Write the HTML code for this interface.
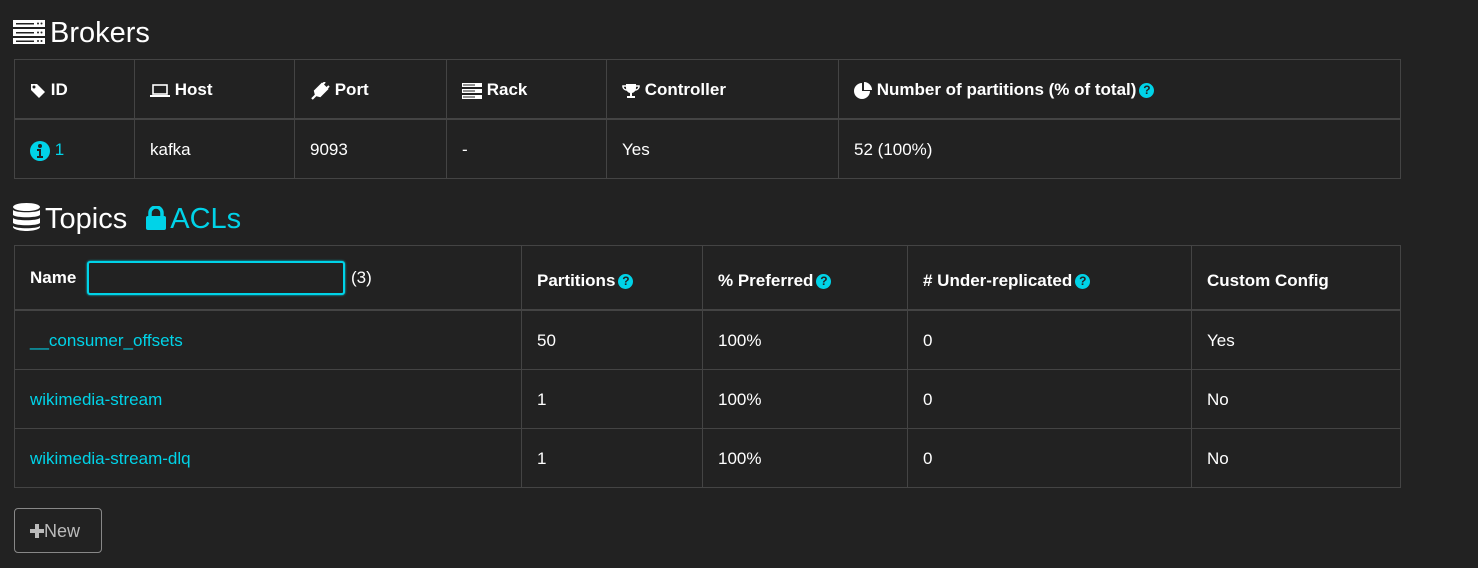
<!DOCTYPE html>
<html><head><meta charset="utf-8"><style>
*{margin:0;padding:0;box-sizing:border-box}
body{width:1478px;height:568px;background:#222;color:#fff;font-family:"Liberation Sans",sans-serif;font-size:17px;position:relative;overflow:hidden}
.a{position:absolute;white-space:nowrap}
.c{color:#00d3e8}
.h{font-weight:bold;font-size:17px;letter-spacing:0}
.line{position:absolute;background:#444}
.q{display:inline-block;width:15px;height:15px;border-radius:50%;background:#00d3e8;color:#222;font-size:12px;font-weight:bold;text-align:center;line-height:15px;vertical-align:1px;margin-left:3px;letter-spacing:0}
svg{vertical-align:middle}
</style></head><body>

<div class="a" style="left:13px;top:15px;font-size:29px;line-height:36px">
<svg width="32" height="24" viewBox="0 0 32 24" style="vertical-align:-2px;margin-right:5px"><g fill="#fff"><rect x="0" y="0" width="32" height="7"/><rect x="0" y="9" width="32" height="7"/><rect x="0" y="18" width="32" height="6"/></g><g fill="#222"><rect x="3" y="3" width="18" height="1.5"/><rect x="3" y="12" width="18" height="1.5"/><rect x="3" y="20.5" width="18" height="1.5"/><circle cx="25" cy="3.5" r="1"/><circle cx="28.5" cy="3.5" r="1"/><circle cx="25" cy="12.5" r="1"/><circle cx="28.5" cy="12.5" r="1"/><circle cx="25" cy="21" r="1"/><circle cx="28.5" cy="21" r="1"/></g></svg>Brokers</div>

<div class="line" style="left:14px;top:59px;width:1387px;height:1px"></div>
<div class="line" style="left:14px;top:118px;width:1387px;height:2px"></div>
<div class="line" style="left:14px;top:178px;width:1387px;height:1px"></div>
<div class="line" style="left:14px;top:59px;width:1px;height:120px"></div>
<div class="line" style="left:134px;top:59px;width:1px;height:120px"></div>
<div class="line" style="left:294px;top:59px;width:1px;height:120px"></div>
<div class="line" style="left:446px;top:59px;width:1px;height:120px"></div>
<div class="line" style="left:606px;top:59px;width:1px;height:120px"></div>
<div class="line" style="left:838px;top:59px;width:1px;height:120px"></div>
<div class="line" style="left:1400px;top:59px;width:1px;height:120px"></div>

<div class="a h" style="left:30px;top:80px"><svg width="16" height="16" viewBox="0 0 16 16"><path d="M1 1h6l8 8-6 6-8-8z" fill="#fff"/><circle cx="4" cy="4" r="1.5" fill="#222"/></svg> ID</div>
<div class="a h" style="left:150px;top:80px"><svg width="20" height="14" viewBox="0 0 20 14"><rect x="3" y="1" width="14" height="9" fill="none" stroke="#fff" stroke-width="1.6"/><rect x="0" y="11" width="20" height="2" fill="#fff"/></svg> Host</div>
<div class="a h" style="left:310px;top:80px"><svg width="20" height="18" viewBox="0 0 20 18"><path d="M2 17l4-4M6 13l-1-4 7-7 5 5-7 7z" stroke="#fff" stroke-width="2.2" fill="#fff"/><path d="M12 3l3-3M16 7l3-3" stroke="#fff" stroke-width="2"/></svg> Port</div>
<div class="a h" style="left:462px;top:80px"><svg width="20" height="16" viewBox="0 0 20 16"><g fill="#fff"><rect y="0" width="20" height="4"/><rect y="6" width="20" height="4"/><rect y="12" width="20" height="4"/></g><g fill="#222"><rect x="1" y="1.5" width="12" height="1"/><rect x="1" y="7.5" width="12" height="1"/><rect x="1" y="13.5" width="12" height="1"/></g></svg> Rack</div>
<div class="a h" style="left:622px;top:80px"><svg width="18" height="16" viewBox="0 0 18 16"><path d="M4 1h10v4a5 5 0 0 1-4 5v3h3v2H5v-2h3v-3a5 5 0 0 1-4-5z" fill="#fff"/><path d="M4 3H1v1a4 4 0 0 0 4 3M14 3h3v1a4 4 0 0 1-4 3" stroke="#fff" stroke-width="1.5" fill="none"/></svg> Controller</div>
<div class="a h" style="left:854px;top:80px"><svg width="18" height="18" viewBox="0 0 18 18"><path d="M8 1v8h8A8 8 0 1 1 8 1z" fill="#fff"/><path d="M10 0a8 8 0 0 1 8 8h-8z" fill="#fff"/></svg> Number of partitions (% of total)<span class="q">?</span></div>

<div class="a c" style="left:30px;top:140px"><svg width="20" height="20" viewBox="0 0 20 20"><circle cx="10" cy="10" r="10" fill="#00d3e8"/><circle cx="10" cy="5" r="2" fill="#222"/><path d="M7 8h4v7h2v2H7v-2h2v-5H7z" fill="#222"/></svg> 1</div>
<div class="a" style="left:150px;top:140px">kafka</div>
<div class="a" style="left:310px;top:140px">9093</div>
<div class="a" style="left:462px;top:140px">-</div>
<div class="a" style="left:622px;top:140px">Yes</div>
<div class="a" style="left:854px;top:140px">52 (100%)</div>

<div class="a" style="left:13px;top:201px;font-size:29px;line-height:36px">
<svg width="27" height="28" viewBox="0 0 27 28" style="vertical-align:-3px;margin-right:5px"><g fill="#fff"><ellipse cx="13.5" cy="4" rx="13.5" ry="4"/><path d="M0 7c3 3 24 3 27 0v5c-3 3-24 3-27 0z"/><path d="M0 15c3 3 24 3 27 0v5c-3 3-24 3-27 0z"/><path d="M0 23c3 3 24 3 27 0v1c0 2-6 4-13.5 4S0 26 0 24z"/></g></svg>Topics <span class="c" style="margin-left:11px"><svg width="20" height="24" viewBox="0 0 20 24" style="vertical-align:-2px;margin-right:4px"><path d="M4 10V7a6 6 0 0 1 12 0v3" stroke="#00d3e8" stroke-width="3.5" fill="none"/><rect x="0" y="10" width="20" height="14" rx="2" fill="#00d3e8"/></svg>ACLs</span></div>

<div class="line" style="left:14px;top:245px;width:1387px;height:1px"></div>
<div class="line" style="left:14px;top:309px;width:1387px;height:2px"></div>
<div class="line" style="left:14px;top:369px;width:1387px;height:1px"></div>
<div class="line" style="left:14px;top:428px;width:1387px;height:1px"></div>
<div class="line" style="left:14px;top:487px;width:1387px;height:1px"></div>
<div class="line" style="left:14px;top:245px;width:1px;height:243px"></div>
<div class="line" style="left:521px;top:245px;width:1px;height:243px"></div>
<div class="line" style="left:702px;top:245px;width:1px;height:243px"></div>
<div class="line" style="left:907px;top:245px;width:1px;height:243px"></div>
<div class="line" style="left:1191px;top:245px;width:1px;height:243px"></div>
<div class="line" style="left:1400px;top:245px;width:1px;height:243px"></div>

<div class="a h" style="left:30px;top:268px">Name</div>
<div class="a" style="left:87px;top:261px;width:258px;height:34px;border:2px solid #00d3e8;border-radius:3px;background:#222;box-shadow:0 0 2px #00d3e8"></div>
<div class="a" style="left:351px;top:268px">(3)</div>
<div class="a h" style="left:537px;top:271px">Partitions<span class="q">?</span></div>
<div class="a h" style="left:718px;top:271px">% Preferred<span class="q">?</span></div>
<div class="a h" style="left:923px;top:271px"># Under-replicated<span class="q">?</span></div>
<div class="a h" style="left:1207px;top:271px">Custom Config</div>

<div class="a c" style="left:30px;top:331px">__consumer_offsets</div>
<div class="a" style="left:537px;top:331px">50</div>
<div class="a" style="left:718px;top:331px">100%</div>
<div class="a" style="left:923px;top:331px">0</div>
<div class="a" style="left:1207px;top:331px">Yes</div>

<div class="a c" style="left:30px;top:390px">wikimedia-stream</div>
<div class="a" style="left:537px;top:390px">1</div>
<div class="a" style="left:718px;top:390px">100%</div>
<div class="a" style="left:923px;top:390px">0</div>
<div class="a" style="left:1207px;top:390px">No</div>

<div class="a c" style="left:30px;top:449px">wikimedia-stream-dlq</div>
<div class="a" style="left:537px;top:449px">1</div>
<div class="a" style="left:718px;top:449px">100%</div>
<div class="a" style="left:923px;top:449px">0</div>
<div class="a" style="left:1207px;top:449px">No</div>

<div class="a" style="left:14px;top:508px;width:88px;height:45px;border:1px solid #888;border-radius:4px;color:#bbb;font-size:18px;line-height:45px;padding-left:15px">
<svg width="14" height="14" viewBox="0 0 14 14" style="vertical-align:-1px"><path d="M5 0h4v5h5v4H9v5H5V9H0V5h5z" fill="#bbb"/></svg>New</div>

</body></html>
